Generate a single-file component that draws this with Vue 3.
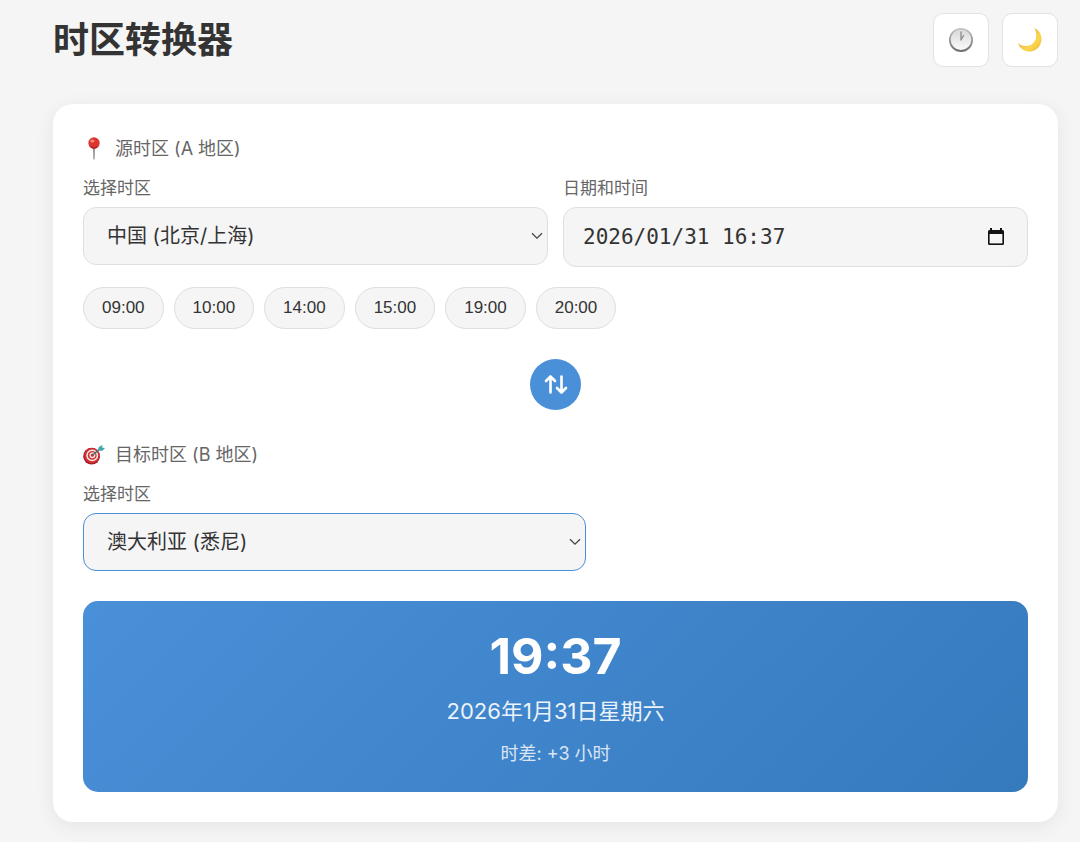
<script setup>
import { ref } from 'vue'

const source = ref('中国 (北京/上海)')
const target = ref('澳大利亚 (悉尼)')
const dateTime = ref('2026/01/31 16:37')
const zones = ['中国 (北京/上海)', '澳大利亚 (悉尼)']
const quickTimes = ['09:00', '10:00', '14:00', '15:00', '19:00', '20:00']

function pickTime(time) {
  dateTime.value = `${dateTime.value.split(' ')[0]} ${time}`
}

function swap() {
  const previous = source.value
  source.value = target.value
  target.value = previous
}
</script>

<template>
  <div class="page">
    <header class="header">
      <h1>时区转换器</h1>
      <div class="tools">
        <button class="tool" type="button" aria-label="当前时间">
          <svg width="26" height="26" viewBox="0 0 26 26" aria-hidden="true">
            <defs>
              <linearGradient id="rim" x1="0" y1="0" x2="0" y2="1">
                <stop offset="0" stop-color="#c2c2c4" />
                <stop offset="1" stop-color="#6c6c6e" />
              </linearGradient>
              <linearGradient id="face" x1="0" y1="0" x2="0" y2="1">
                <stop offset="0" stop-color="#d9d9db" />
                <stop offset="1" stop-color="#fafafa" />
              </linearGradient>
            </defs>
            <circle cx="13" cy="13" r="12" fill="url(#rim)" />
            <circle cx="13" cy="12.8" r="10.3" fill="url(#face)" />
            <path d="M13 4.5V13L15.8 8" fill="none" stroke="#929294" stroke-width="1.4" stroke-linejoin="round" />
          </svg>
        </button>
        <button class="tool" type="button" aria-label="深色模式">
          <svg width="26" height="26" viewBox="0 0 26 26" aria-hidden="true">
            <defs>
              <linearGradient id="moon" x1="0" y1="0" x2="1" y2="1">
                <stop offset="0.3" stop-color="#e9b43c" />
                <stop offset="0.65" stop-color="#fbd751" />
                <stop offset="1" stop-color="#eeb52f" />
              </linearGradient>
            </defs>
            <path d="M17.4 1C23.7 3.9 26.2 11 23.4 17.2C20.4 23.8 13.2 26.2 7.2 23.4C4.2 22 2 19.4 1 15.8C4 19.2 9.2 20 13.4 18C19.2 15.2 21.1 8 17.4 1Z" fill="url(#moon)" />
          </svg>
        </button>
      </div>
    </header>

    <main class="card">
      <h2>
        <svg width="22" height="24" viewBox="0 0 22 24" aria-hidden="true">
          <path d="M10 9H12L11.6 22L11 23L10.4 22Z" fill="#8b8d90" />
          <circle cx="11" cy="6" r="5.7" fill="#dc3631" />
          <path d="M6 8.5Q11 12 16 8.5Q14 11.8 11 11.8Q8 11.8 6 8.5Z" fill="#b3221f" />
          <ellipse cx="9.4" cy="4" rx="2" ry="1.5" fill="#f58c82" />
        </svg>
        源时区 (A 地区)
      </h2>
      <div class="fields">
        <div class="field">
          <label for="source">选择时区</label>
          <div class="select">
            <select id="source" v-model="source">
              <option v-for="zone in zones" :key="zone">{{ zone }}</option>
            </select>
            <svg class="chevron" width="12" height="8" viewBox="0 0 12 8" aria-hidden="true">
              <path d="M1 1.2L6 6.2L11 1.2" fill="none" stroke="#444" stroke-width="1.3" />
            </svg>
          </div>
        </div>
        <div class="field">
          <label for="datetime">日期和时间</label>
          <div class="date">
            <input id="datetime" v-model="dateTime" type="text">
            <button class="calendar" type="button" aria-label="打开日历">
              <svg width="18" height="20" viewBox="0 0 18 20" aria-hidden="true">
                <path d="M3 1H5V3H13V1H15V3H15.5Q17 3 17 4.5V16.5Q17 18 15.5 18H2.5Q1 18 1 16.5V4.5Q1 3 2.5 3H3Z" fill="#111" />
                <path d="M2.6 7H15.4V16.4H2.6Z" fill="#f5f5f5" />
              </svg>
            </button>
          </div>
        </div>
      </div>

      <div class="quick">
        <button v-for="time in quickTimes" :key="time" type="button" @click="pickTime(time)">{{ time }}</button>
      </div>

      <button class="swap" type="button" aria-label="交换时区" @click="swap">
        <svg width="24" height="22" viewBox="0 0 24 22" fill="none" stroke="#fff" stroke-width="2.6" stroke-linecap="round" stroke-linejoin="round" aria-hidden="true">
          <path d="M6.5 18.5V2.5M2 7L6.5 2.5L11 7" />
          <path d="M17.5 2.5V18.5M13 14L17.5 18.5L22 14" />
        </svg>
      </button>

      <h2>
        <svg width="22" height="22" viewBox="0 0 22 22" aria-hidden="true">
          <ellipse cx="8.6" cy="12.2" rx="8.4" ry="8.4" fill="#a81f25" />
          <circle cx="9" cy="11.6" r="7.6" fill="#cf3036" />
          <circle cx="9.2" cy="11.4" r="5.2" fill="none" stroke="#f6e9e6" stroke-width="1.5" />
          <circle cx="9.4" cy="11.2" r="2.3" fill="none" stroke="#f6e9e6" stroke-width="1.3" />
          <path d="M9.5 11.2L17.5 4.4" stroke="#39767c" stroke-width="1.4" />
          <path d="M15 6.3L15.8 3L19.4 1L19.2 3.6L22 4.2L19 7Z" fill="#45a9ac" />
        </svg>
        目标时区 (B 地区)
      </h2>
      <div class="field target">
        <label for="target">选择时区</label>
        <div class="select">
          <select id="target" v-model="target" class="active">
            <option v-for="zone in zones" :key="zone">{{ zone }}</option>
          </select>
          <svg class="chevron" width="12" height="8" viewBox="0 0 12 8" aria-hidden="true">
            <path d="M1 1.2L6 6.2L11 1.2" fill="none" stroke="#444" stroke-width="1.3" />
          </svg>
        </div>
      </div>

      <section class="result" aria-live="polite">
        <div class="time">19:37</div>
        <div class="day">2026年1月31日星期六</div>
        <div class="offset">时差: +3 小时</div>
      </section>
    </main>
  </div>
</template>

<style>
body {
  background: #f5f5f5;
}
</style>

<style scoped>
.page,
.page * {
  box-sizing: border-box;
}

.page {
  padding: 13px 22px 20px 53px;
  color: #333;
  font-family: Inter, "Noto Sans CJK SC", sans-serif;
}

.header {
  display: flex;
  align-items: center;
  justify-content: space-between;
  margin-bottom: 37px;
}

h1 {
  margin: 0;
  font-size: 36px;
  line-height: 54px;
  font-weight: 700;
}

.tools {
  display: flex;
  gap: 13px;
}

.tool {
  display: flex;
  align-items: center;
  justify-content: center;
  width: 56px;
  height: 54px;
  padding: 0;
  border: 1px solid #e2e2e2;
  border-radius: 10px;
  background: #fff;
}

.card {
  padding: 30px;
  border-radius: 20px;
  background: #fff;
  box-shadow: 0 4px 20px rgba(0, 0, 0, 0.07);
}

h2 {
  display: flex;
  align-items: center;
  gap: 10px;
  margin: 0 0 12px;
  color: #666;
  font-size: 18px;
  line-height: 30px;
  font-weight: 400;
}

.fields {
  display: grid;
  grid-template-columns: 1fr 1fr;
  gap: 15px;
}

label {
  display: block;
  margin-bottom: 7px;
  color: #666;
  font-size: 17px;
  line-height: 24px;
}

.select {
  position: relative;
}

select,
.date {
  width: 100%;
  border: 1px solid #dfdfdf;
  border-radius: 13px;
  background: #f5f5f5;
  color: #333;
}

select {
  display: block;
  height: 58px;
  padding: 0 30px 0 23px;
  appearance: none;
  outline: none;
  font: inherit;
  font-size: 20px;
}

select.active {
  border-color: #4a90d9;
}

.chevron {
  position: absolute;
  top: 25px;
  right: 5px;
  pointer-events: none;
}

.date {
  display: flex;
  align-items: center;
  height: 60px;
  padding: 0 22px 0 19px;
}

.date input {
  flex: 1;
  min-width: 0;
  padding: 0;
  border: 0;
  outline: none;
  background: none;
  color: #333;
  font-family: "DejaVu Sans Mono", monospace;
  font-size: 21px;
}

.calendar {
  display: flex;
  padding: 0;
  border: 0;
  background: none;
}

.quick {
  display: flex;
  flex-wrap: wrap;
  gap: 10px;
  margin-top: 20px;
}

.quick button {
  height: 42px;
  padding: 0 18px;
  border: 1px solid #dfdfdf;
  border-radius: 21px;
  background: #f5f5f5;
  color: #333;
  font-family: "Liberation Sans", sans-serif;
  font-size: 17px;
}

.swap {
  display: flex;
  align-items: center;
  justify-content: center;
  width: 51px;
  height: 51px;
  margin: 30px auto;
  padding: 0;
  border: 0;
  border-radius: 50%;
  background: #4a90d9;
}

.target {
  width: 53.2%;
}

.result {
  margin-top: 30px;
  padding: 25px;
  border-radius: 15px;
  background: linear-gradient(135deg, #4a90d9, #357abd);
  color: #fff;
  text-align: center;
}

.time {
  font-size: 50px;
  line-height: 60px;
  font-weight: 700;
}

.day {
  margin-top: 9px;
  font-size: 22px;
  line-height: 32px;
  opacity: 0.9;
}

.offset {
  margin-top: 14px;
  font-size: 18px;
  line-height: 26px;
  opacity: 0.8;
}
</style>
